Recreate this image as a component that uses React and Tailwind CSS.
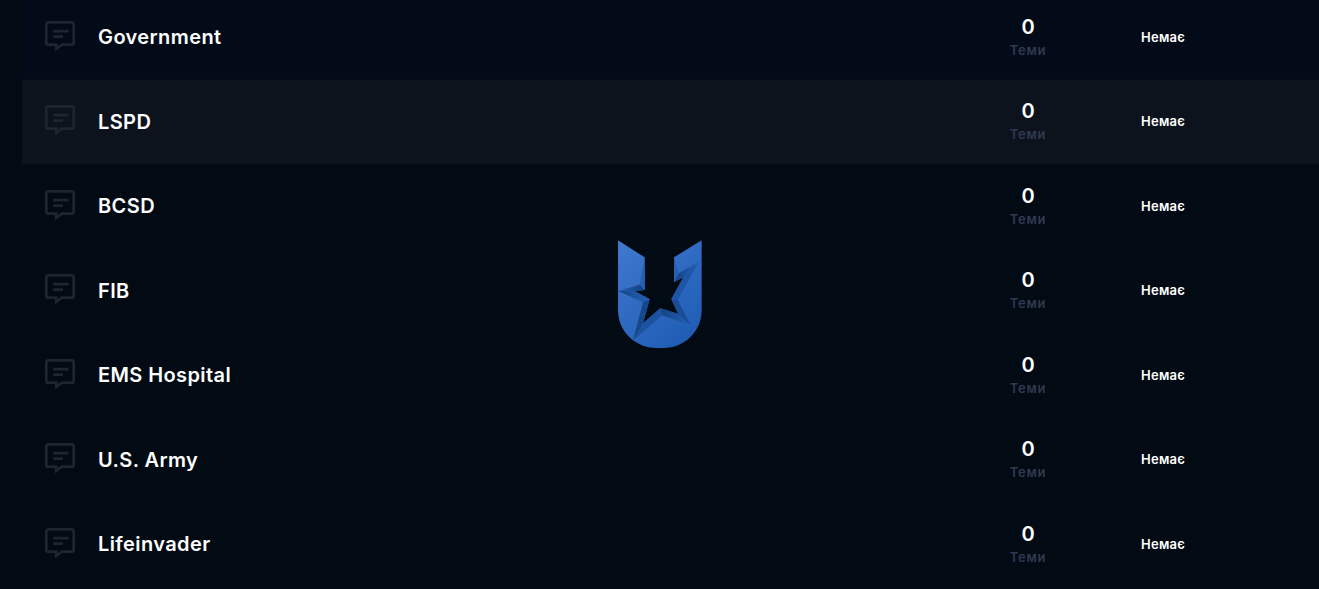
const forums = [
  "Government",
  "LSPD",
  "BCSD",
  "FIB",
  "EMS Hospital",
  "U.S. Army",
  "Lifeinvader",
];

const rowStyles = {
  Government: "bg-[#040b18]",
  LSPD: "bg-[#0d131d]",
};

function ForumIcon() {
  return (
    <svg
      className="mb-[3px] h-8 w-8 shrink-0 text-[#1e252f]"
      viewBox="0 0 32 32"
      fill="none"
      stroke="currentColor"
      strokeWidth="2.7"
    >
      <path d="M4.3 2.3h23.4a2 2 0 0 1 2 2v18.4a2 2 0 0 1-2 2H18l-5.8 4.2v-4.2H4.3a2 2 0 0 1-2-2V4.3a2 2 0 0 1 2-2Z" />
      <path d="M9.2 11.2h15.4M9.2 16.7h9.8" />
    </svg>
  );
}

function Logo() {
  return (
    <svg
      className="pointer-events-none absolute left-[600px] top-[230px] h-[130px] w-[120px]"
      viewBox="0 0 360 390"
    >
      <defs>
        <linearGradient id="logo-base" x1="0.1" y1="0" x2="0.8" y2="1">
          <stop offset="0" stopColor="#3f78cd" />
          <stop offset="1" stopColor="#1e5cb4" />
        </linearGradient>
        <linearGradient id="logo-fold" x1="0" y1="0" x2="1" y2="0">
          <stop offset="0" stopColor="#2562b8" />
          <stop offset="1" stopColor="#123d7c" />
        </linearGradient>
        <linearGradient id="logo-fold-back" x1="1" y1="0" x2="0" y2="0">
          <stop offset="0" stopColor="#2562b8" />
          <stop offset="1" stopColor="#144283" />
        </linearGradient>
      </defs>
      <path
        fill="url(#logo-base)"
        d="M54 31 134 82V180L105 184 149 208 129 280 181 235 235 252 214 208 250 142 222 157V82L305 31V240C305 306 252 354 190 354H170C108 354 54 306 54 240Z"
      />
      <path fill="#2860b1" d="M134 82V180L119 164Z" />
      <path fill="url(#logo-fold)" d="M54 183 119 164 134 180 105 184Z" />
      <path fill="url(#logo-fold-back)" d="M54 183 105 184 149 208 129 217Z" />
      <path fill="#164789" d="M129 217 149 208 129 280 99 332Z" />
      <path fill="#1c529f" d="M99 332 129 280 181 235 186 256Z" />
      <path fill="url(#logo-fold-back)" d="M181 235 235 252 272 286 186 256Z" />
      <path fill="#194d96" d="M214 208 233 210 272 286 235 252Z" />
      <path fill="#1d56a6" d="M214 208 250 142 296 95 233 210Z" />
      <path fill="url(#logo-fold-back)" d="M222 157 236 130 296 95 250 142Z" />
      <path fill="#2860b1" d="M222 82V157L236 130Z" />
    </svg>
  );
}

function ForumRow({ title }) {
  return (
    <div
      className={`flex h-[84.5px] shrink-0 items-center border-b border-[#060d17] pl-[22px] ${rowStyles[title] ?? ""}`}
    >
      <ForumIcon />
      <h3 className="ml-[22px] flex-1 text-[20px] font-semibold leading-6 tracking-[0.4px] text-white">
        {title}
      </h3>
      <dl className="w-[60px] pt-px text-center">
        <dd className="text-[20px] font-semibold leading-6 text-white">0</dd>
        <dt className="text-[13px] font-semibold leading-[22px] tracking-[0.7px] text-[#2f3a50]">
          Теми
        </dt>
      </dl>
      <div className="ml-[83px] w-[178px] text-[13px] font-semibold tracking-[0.25px] text-white">
        Немає
      </div>
    </div>
  );
}

export default function App() {
  return (
    <div className="relative h-[589px] w-full overflow-hidden bg-[#020a14] font-['Inter',sans-serif]">
      <div className="-mt-[4.5px] ml-[22px] flex flex-col">
        {forums.map((title) => (
          <ForumRow key={title} title={title} />
        ))}
      </div>
      <Logo />
    </div>
  );
}
